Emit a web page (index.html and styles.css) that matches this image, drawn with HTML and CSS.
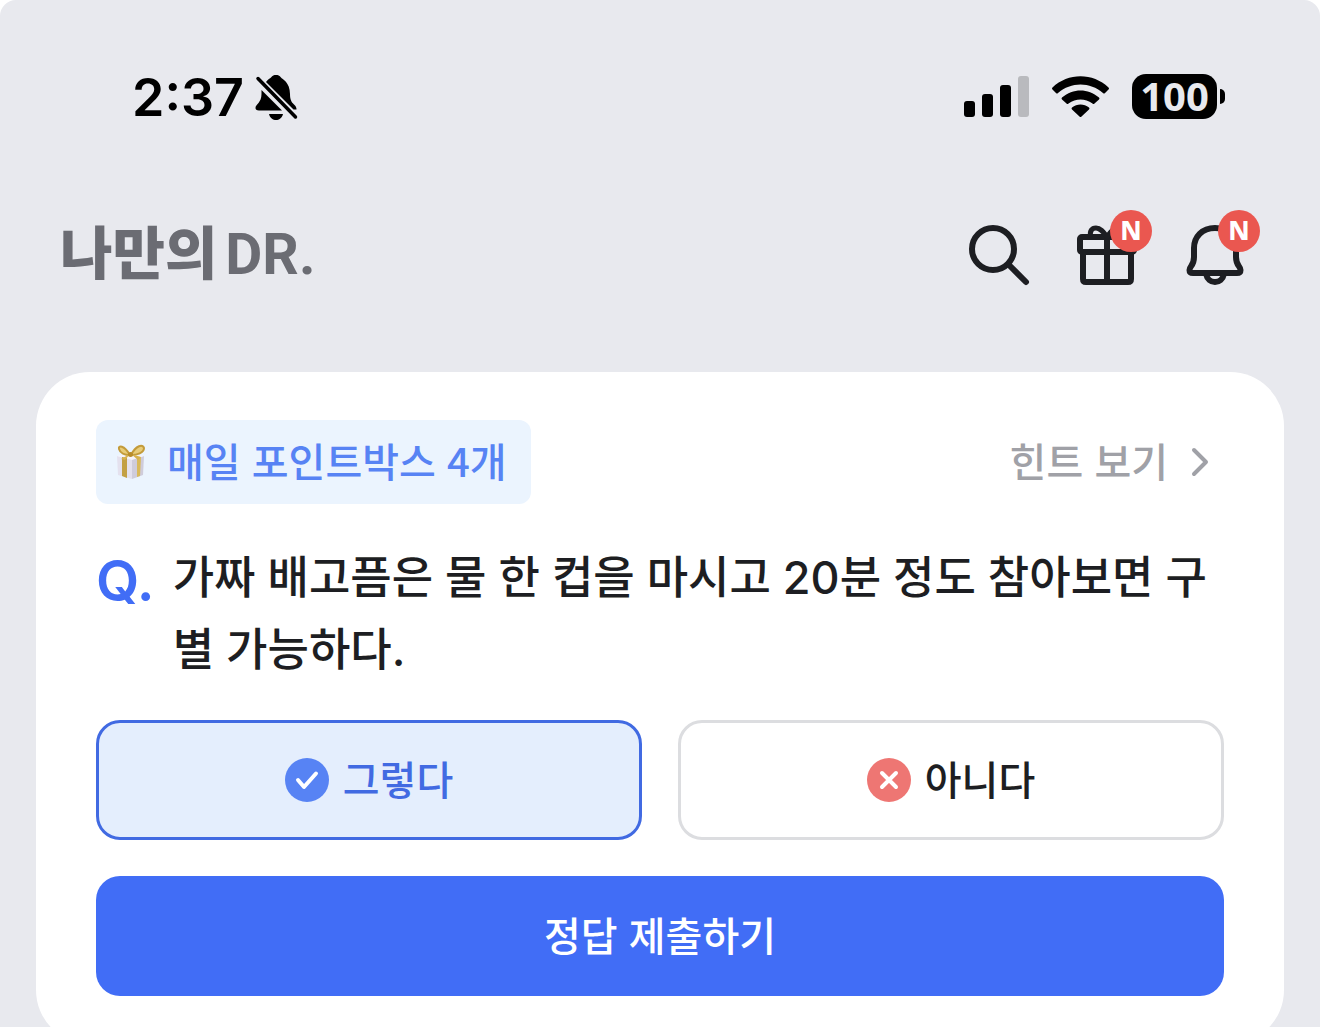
FILE: index.html
```html
<!DOCTYPE html>
<html lang="ko">
<head>
  <meta charset="UTF-8">
  <meta name="viewport" content="width=device-width, initial-scale=1.0">
  <title>나만의 DR.</title>
  <link rel="stylesheet" href="styles.css">
</head>
<body>
  <div class="screen">
    <!-- Status bar -->
    <div class="status-bar">
      <div class="status-left">
        <span class="time">2:37</span>
        <svg width="44" height="48" viewBox="0 0 44 48" aria-hidden="true">
          <path d="M12 9C14 6 16 5.500 17 4.500C18.500 2.500 20 2 22 2C24 2 25.500 2.500 27 4.500C28 6 36 9 36 21C36 27 37.500 29 40 31.500C42 33.500 42.500 34.500 42.500 36.500L39.500 36.500Z"/>
          <path d="M7.500 17L28 37.500H5C2.500 37.500 1.500 36.500 1.500 35C1.500 31 7.500 30 7.500 21Z"/>
          <path d="M15 41H29C28 45 25 47 22 47C19 47 16 45 15 41Z"/>
          <path d="M4 5.500L41.500 44" stroke="#000" stroke-width="3.500" stroke-linecap="round"/>
        </svg>
      </div>
      <div class="status-right">
        <svg class="signal" width="66" height="42" viewBox="0 0 66 42" aria-hidden="true">
          <rect x="0" y="25" width="11" height="16" rx="3"/>
          <rect x="18" y="18" width="11" height="23" rx="3"/>
          <rect x="36" y="9" width="11" height="32" rx="3"/>
          <rect x="54" y="0" width="11" height="41" rx="3" fill="#b9babe"/>
        </svg>
        <svg class="wifi" width="58" height="42" viewBox="0 0 58 42" aria-hidden="true">
          <path d="M.5 11.500C16-3.500 41-3.500 56.500 11.500Q57.500 12.500 56.500 13.500L53 17Q52 18 51 17C38 5.500 19 5.500 6 17Q5 18 4 17L.5 13.500Q-.5 12.500 .5 11.500Z"/>
          <path d="M10 21.500C21 12 36 12 47 21.500Q48 22.500 47 23.500L42.500 27.500Q41.500 28.500 40.500 27.500C33 22 24 22 16.500 27.500Q15.500 28.500 14.500 27.500L10 23.500Q9 22.500 10 21.500Z"/>
          <path d="M20 31.500C25 27.500 32 27.500 37 31.500Q38 32.500 37 33.500L29.500 40.500Q28.500 41.500 27.500 40.500L20 33.500Q19 32.500 20 31.500Z"/>
        </svg>
        <div class="battery"><span class="battery-level">100</span></div>
      </div>
    </div>

    <header class="header">
      <a class="logo" href="#"><span>나만의</span><span class="logo-dr">DR.</span></a>
      <nav class="actions">
        <button class="icon-btn" type="button" aria-label="검색">
          <svg width="72" height="72" viewBox="0 0 72 72" fill="none" stroke="#1d1e22" stroke-width="6" stroke-linecap="round">
            <circle cx="30" cy="30" r="21"/>
            <path d="M46 46L63 63"/>
          </svg>
        </button>
        <button class="icon-btn" type="button" aria-label="선물">
          <svg width="72" height="72" viewBox="0 0 72 72" fill="none" stroke="#1d1e22" stroke-width="6" stroke-linejoin="round">
            <rect x="9" y="18" width="54" height="15" rx="2"/>
            <path d="M12 33V60Q12 63 15 63H57Q60 63 60 60V33"/>
            <path d="M36 18V63"/>
            <path d="M20 18C18 12 21 9 25 9C30 9 33 14 36 18C39 14 42 9 47 9C51 9 54 12 52 18" stroke-width="5"/>
          </svg>
          <span class="new-badge">N</span>
        </button>
        <button class="icon-btn" type="button" aria-label="알림">
          <svg width="72" height="72" viewBox="0 0 72 72" fill="none" stroke="#1d1e22" stroke-width="6" stroke-linejoin="round">
            <path d="M36 9C23 9 15 18 15 29V38C15 47 10.500 47 10.500 51Q10.500 54 14 54H58Q61.500 54 61.500 51C61.500 47 57 47 57 38V29C57 18 49 9 36 9Z"/>
            <path d="M27 55C28 60 32 63 36 63C40 63 44 60 45 55"/>
          </svg>
          <span class="new-badge">N</span>
        </button>
      </nav>
    </header>

    <main class="content">
      <form class="card">
        <div class="card-top">
          <div class="point-box">
            <svg width="36" height="36" viewBox="0 0 36 36" aria-hidden="true">
              <path d="M4 12L19 15V35L5 31Z" fill="#e4e1ee"/>
              <path d="M19 15L31 12L30 31L19 35Z" fill="#cfccdb"/>
              <path d="M4 12L17 9L31 12L19 16Z" fill="#f6f4fa"/>
              <path d="M9 13L14 14V34L9 32Z" fill="#c3a044"/>
              <path d="M24 14L28 13L27 32L24 33Z" fill="#d9b95c"/>
              <path d="M17 11C11 1 5 1 6 5C7 9 12 11 17 11ZM18 11C23 1 30 0 31 4C31 9 24 11 18 11Z" fill="#e8cc79" stroke="#c39b3a" stroke-width="2"/>
              <path d="M17 10L8 15L12 16ZM18 10L28 13L25 16Z" fill="#d7b24e"/>
              <circle cx="17.500" cy="10.500" r="2.500" fill="#b88c2a"/>
            </svg>
            <span class="label">매일 포인트박스 4개</span>
          </div>
          <a class="hint" href="#">
            <span class="label">힌트 보기</span>
            <svg width="24" height="36" viewBox="0 0 24 36" fill="none" stroke="#a0a1a7" stroke-width="4" stroke-linecap="round" stroke-linejoin="round">
              <path d="M6 6L18 18L6 30"/>
            </svg>
          </a>
        </div>

        <div class="question">
          <span class="question-mark">Q.</span>
          <p class="question-text">가짜 배고픔은 물 한 컵을 마시고 20분 정도 참아보면 구별 가능하다.</p>
        </div>

        <div class="options">
          <button class="option selected" type="button">
            <svg width="44" height="44" viewBox="0 0 44 44" fill="none" aria-hidden="true">
              <circle cx="22" cy="22" r="22" fill="#5783f4"/>
              <path d="M13 22L19 29L31 15.500" stroke="#fff" stroke-width="4" stroke-linecap="round" stroke-linejoin="round"/>
            </svg>
            <span class="label">그렇다</span>
          </button>
          <button class="option" type="button">
            <svg width="44" height="44" viewBox="0 0 44 44" fill="none" aria-hidden="true">
              <circle cx="22" cy="22" r="22" fill="#ee7673"/>
              <path d="M15 15L29 29M29 15L15 29" stroke="#fff" stroke-width="4" stroke-linecap="round"/>
            </svg>
            <span class="label">아니다</span>
          </button>
        </div>

        <button class="submit" type="submit">정답 제출하기</button>
      </form>
    </main>
  </div>
</body>
</html>
```
FILE: styles.css
```css
* {
  box-sizing: border-box;
}

body {
  margin: 0;
  background-color: #fff;
  color: #1d1e22;
  font-family: "Noto Sans CJK KR", sans-serif;
  font-weight: 500;
}

button {
  margin: 0;
  padding: 0;
  border: none;
  background: none;
  color: inherit;
  font-family: inherit;
  font-weight: inherit;
  cursor: pointer;
}

a {
  color: inherit;
  text-decoration: none;
}

svg {
  display: block;
  flex-shrink: 0;
}

.screen {
  height: 100vh;
  overflow: hidden;
  background-color: #e8e9ee;
  border-radius: 16px 16px 0 0;
}

/* Status bar */
.status-bar {
  display: flex;
  justify-content: space-between;
  align-items: center;
  padding: 71px 95px 0 132px;
  height: 122px;
  color: #000;
}

.status-left,
.status-right {
  display: flex;
  align-items: center;
}

.status-left {
  gap: 10px;
}

.status-right {
  gap: 22px;
}

.time {
  padding-top: 3px;
  font-family: Inter, sans-serif;
  font-size: 52px;
  font-weight: 600;
  line-height: 48px;
}

.battery {
  position: relative;
  width: 85px;
  height: 45px;
  margin-right: 8px;
  border-radius: 14px;
  background-color: #000;
  color: #e8e9ee;
  font-family: "Noto Sans", sans-serif;
  font-size: 40px;
  font-weight: 700;
  line-height: 44px;
  text-align: center;
}

.battery::after {
  content: "";
  position: absolute;
  left: 88px;
  top: 15px;
  width: 5px;
  height: 15px;
  border-radius: 0 5px 5px 0;
  background-color: #000;
}

/* Header */
.header {
  display: flex;
  justify-content: space-between;
  align-items: center;
  padding: 96px 69px 81px 60px;
}

.logo {
  display: flex;
  align-items: baseline;
  gap: 8px;
  color: #6b6c73;
  font-family: Inter, "Noto Sans CJK KR", sans-serif;
  font-size: 57px;
  font-weight: 900;
  line-height: 72px;
}

.logo-dr {
  font-family: Roboto, sans-serif;
  font-weight: 700;
}

.actions {
  display: flex;
  gap: 36px;
}

.icon-btn {
  position: relative;
  width: 72px;
  height: 72px;
}

.new-badge {
  position: absolute;
  top: -9px;
  left: 39px;
  width: 42px;
  height: 42px;
  border-radius: 50%;
  background-color: #ea5750;
  color: #fff;
  font-family: "Noto Sans", sans-serif;
  font-size: 26px;
  font-weight: 800;
  line-height: 40px;
  text-align: center;
}

/* Quiz card */
.content {
  padding: 0 36px;
}

.card {
  display: flex;
  flex-direction: column;
  gap: 36px;
  padding: 48px 60px;
  border-radius: 54px;
  background-color: #fff;
}

/* lifts the text to the optical middle of its row */
.label {
  padding-bottom: 4px;
}

.card-top {
  display: flex;
  justify-content: space-between;
  align-items: center;
  font-size: 40px;
}

.point-box {
  display: flex;
  align-items: center;
  gap: 18px;
  height: 84px;
  padding: 0 24px 0 17px;
  border-radius: 12px;
  background-color: #ebf4fe;
  color: #5783f4;
}

.hint {
  display: flex;
  align-items: center;
  gap: 20px;
  padding-right: 12px;
  color: #a0a1a7;
}

.question {
  display: flex;
  gap: 18px;
  margin-bottom: -2px;
  padding-top: 2px;
}

.question-mark {
  color: #416df6;
  font-family: Inter, sans-serif;
  font-size: 56px;
  font-weight: 600;
  line-height: 78px;
}

.question-text {
  margin: 0;
  font-family: Inter, "Noto Sans CJK KR", sans-serif;
  font-size: 45px;
  line-height: 72px;
  word-break: break-all;
}

.options {
  display: flex;
  gap: 36px;
}

.option {
  display: flex;
  flex: 1;
  justify-content: center;
  align-items: center;
  gap: 14px;
  height: 120px;
  border: 3px solid #dcdde0;
  border-radius: 24px;
  font-size: 40px;
}

.option.selected {
  border-color: #416ae2;
  background-color: #e4eefd;
  color: #416ae2;
}

.submit {
  height: 120px;
  padding-bottom: 4px;
  border-radius: 24px;
  background-color: #416df6;
  color: #fff;
  font-size: 40px;
}
```
